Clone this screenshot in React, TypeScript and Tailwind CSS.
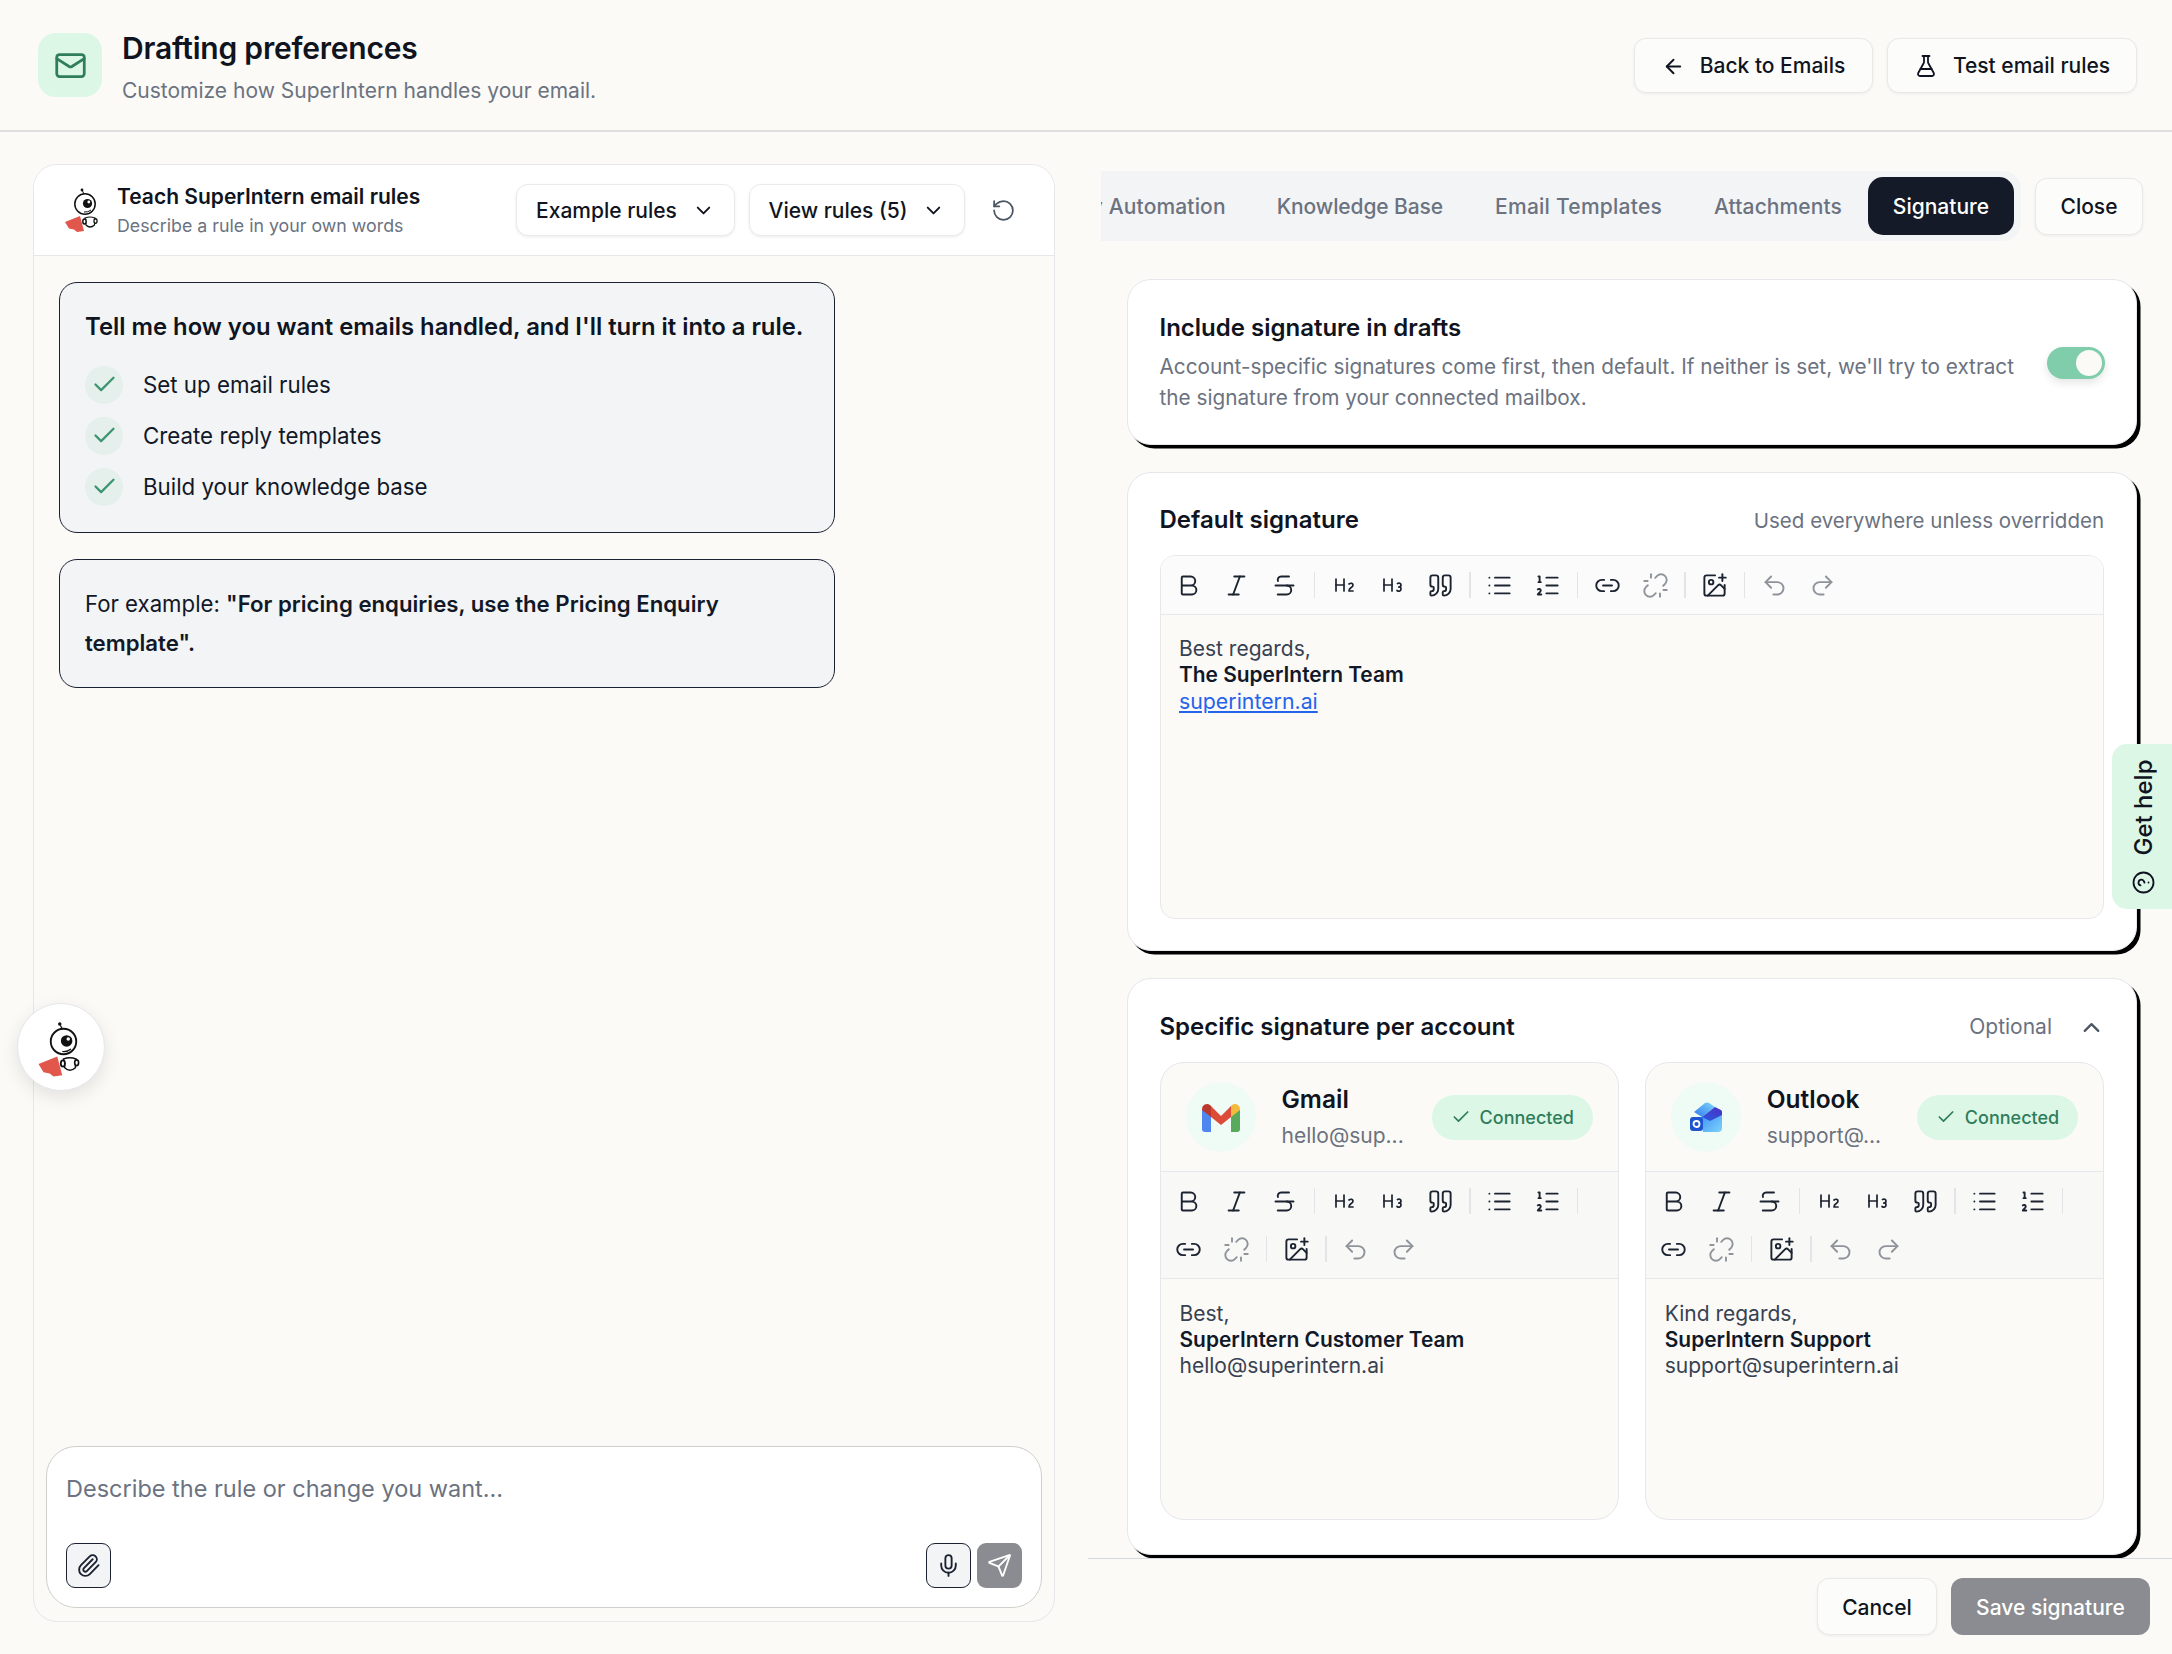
import type { ReactNode } from "react";
import {
  ArrowLeft,
  Bold,
  Check,
  ChevronDown,
  ChevronUp,
  CircleHelp,
  FlaskConical,
  Heading2,
  Heading3,
  ImagePlus,
  Italic,
  Link2,
  List,
  ListOrdered,
  Mail,
  Mic,
  Paperclip,
  Quote,
  Redo2,
  RotateCcw,
  Send,
  Strikethrough,
  Undo2,
  Unlink,
} from "lucide-react";

function BotLogo({ className }: { className: string }) {
  return (
    <svg viewBox="12 16 36 46" className={className} aria-hidden="true">
      <path d="M14 51 L29 45 L33 60 L26 61 L23 58.5 L18 57.5 Z" fill="#e2574c" />
      <circle cx="31" cy="19" r="1.4" fill="#111" />
      <path d="M31.5 20 L33 23" stroke="#111" strokeWidth="1" />
      <circle cx="34" cy="33" r="10.2" fill="#fff" stroke="#111" strokeWidth="1.5" />
      <circle cx="36.5" cy="32.5" r="4.6" fill="#111" />
      <circle cx="37.8" cy="31" r="1.4" fill="#fff" />
      <path d="M33 41 Q37 41.5 40 39" stroke="#111" strokeWidth="1" fill="none" />
      <path d="M34 47 Q39 45 44 47 L43.5 54 Q39 58 35 54 Z" fill="#fff" stroke="#111" strokeWidth="1.2" />
      <ellipse cx="33.5" cy="50.5" rx="2.4" ry="3.2" fill="#111" />
      <ellipse cx="44.5" cy="50" rx="2.2" ry="3" fill="#111" />
      <ellipse cx="33.5" cy="50.5" rx="0.9" ry="1.8" fill="#fff" />
      <ellipse cx="44.5" cy="50" rx="0.9" ry="1.6" fill="#fff" />
    </svg>
  );
}

function GmailLogo() {
  return (
    <svg viewBox="0 0 38 29" className="h-[29px] w-[38px]" aria-hidden="true">
      <path d="M0 6 L9 10 V29 H3 A3 3 0 0 1 0 26 Z" fill="#4f86f0" />
      <path d="M38 6 L29 10 V29 H35 A3 3 0 0 0 38 26 Z" fill="#5aaa5e" />
      <path d="M9 3 L19 13 L29 3 V14 L19 22 L9 14 Z" fill="#dd4b39" />
      <path d="M0 6 A5 5 0 0 1 8 2 L9 3 V14 L0 7 Z" fill="#b93a2c" />
      <path d="M38 6 A5 5 0 0 0 30 2 L29 3 V14 L38 7 Z" fill="#f3bb3e" />
    </svg>
  );
}

function OutlookLogo() {
  return (
    <svg viewBox="0 0 32 30" className="h-[30px] w-[32px]" aria-hidden="true">
      <defs>
        <linearGradient id="olBand1" x1="0" y1="1" x2="1" y2="0">
          <stop offset="0" stopColor="#2f7bf0" />
          <stop offset="1" stopColor="#7fd6fa" />
        </linearGradient>
        <linearGradient id="olBand2" x1="0" y1="1" x2="1" y2="0">
          <stop offset="0" stopColor="#2a5be0" />
          <stop offset="1" stopColor="#4a2fc4" />
        </linearGradient>
        <linearGradient id="olBody" x1="0" y1="0" x2="1" y2="1">
          <stop offset="0" stopColor="#3a8df5" />
          <stop offset="1" stopColor="#7fd3fa" />
        </linearGradient>
      </defs>
      <path d="M11 15 L24 10 L32 10 V26 A4 4 0 0 1 28 30 H13 Z" fill="url(#olBody)" />
      <path d="M4 10 L15 1 Q17 0 19 1 L25 5 L12 15 Z" fill="url(#olBand1)" />
      <path d="M12 15 L25 5 L31 8 Q32 9 32 10 V13 L20 19 Z" fill="url(#olBand2)" />
      <rect x="0" y="15" width="13" height="14" rx="3" fill="#1c55cf" />
      <circle cx="6.5" cy="22" r="3" fill="none" stroke="#fff" strokeWidth="1.8" />
    </svg>
  );
}

function HeaderButton({ children }: { children: ReactNode }) {
  return (
    <button
      type="button"
      className="flex items-center justify-center rounded-[12px] border-[1.5px] border-[#e8e8e6] bg-[#fcfcfa] text-[21px] font-medium text-[#0f1420] shadow-[0_1px_3px_rgba(0,0,0,0.06)]"
    >
      {children}
    </button>
  );
}

function Tool({ children, dim }: { children: ReactNode; dim?: boolean }) {
  return (
    <span className={`flex h-[48px] w-[48px] items-center justify-center ${dim ? "text-[#8f949b]" : "text-[#1c2330]"}`}>
      {children}
    </span>
  );
}

function ToolDivider() {
  return <span className="mx-[5px] h-[26px] w-[1.5px] bg-[#e3e4e7]" />;
}

function EditorToolbar({ className }: { className: string }) {
  const size = 27;
  const sw = 1.7;
  return (
    <div className={`flex flex-wrap items-center px-[4px] py-[5px] ${className}`}>
      <Tool><Bold size={size} strokeWidth={sw} /></Tool>
      <Tool><Italic size={size} strokeWidth={sw} /></Tool>
      <Tool><Strikethrough size={size} strokeWidth={sw} /></Tool>
      <ToolDivider />
      <Tool><Heading2 size={size - 3} strokeWidth={sw} /></Tool>
      <Tool><Heading3 size={size - 3} strokeWidth={sw} /></Tool>
      <Tool><Quote size={size} strokeWidth={sw} /></Tool>
      <ToolDivider />
      <Tool><List size={size} strokeWidth={sw} /></Tool>
      <Tool><ListOrdered size={size} strokeWidth={sw} /></Tool>
      <ToolDivider />
      <Tool><Link2 size={size} strokeWidth={sw} /></Tool>
      <Tool dim><Unlink size={size} strokeWidth={sw} /></Tool>
      <ToolDivider />
      <Tool><ImagePlus size={size} strokeWidth={sw} /></Tool>
      <ToolDivider />
      <Tool dim><Undo2 size={size} strokeWidth={sw} /></Tool>
      <Tool dim><Redo2 size={size} strokeWidth={sw} /></Tool>
    </div>
  );
}

function AccountCard({
  logo,
  name,
  email,
  lines,
}: {
  logo: ReactNode;
  name: string;
  email: string;
  lines: [string, string, string];
}) {
  return (
    <div className="flex h-[458px] w-[460px] flex-col overflow-hidden rounded-[24px] border-[1.5px] border-[#e5e7eb] bg-[#fbfaf7]">
      <div className="flex h-[109px] shrink-0 items-center border-b-[1.5px] border-[#e5e7eb] pl-[25px] pr-[25px]">
        <div className="flex h-[70px] w-[70px] shrink-0 items-center justify-center rounded-full bg-[#effbf5]">{logo}</div>
        <div className="ml-[26px] min-w-0 flex-1">
          <div className="text-[24.5px] leading-[33px] font-semibold text-[#0f1420]">{name}</div>
          <div className="mt-[4px] text-[21px] leading-[31px] text-[#6b7280]">{email}</div>
        </div>
        <div className="flex h-[45px] w-[161px] shrink-0 items-center justify-center gap-[9px] rounded-full bg-[#dcf7e6] text-[18px] font-medium text-[#2f7d5b]">
          <Check size={20} strokeWidth={2} />
          Connected
        </div>
      </div>
      <EditorToolbar className="border-b-[1.5px] border-[#e8e8ea] bg-[#f8f8f7]" />
      <div className="px-[19px] pt-[22px] text-[21px] leading-[26px] text-[#374151]">
        <div>{lines[0]}</div>
        <div className="text-[20.9px] font-semibold text-[#111827]">{lines[1]}</div>
        <div>{lines[2]}</div>
      </div>
    </div>
  );
}

function ChecklistRow({ label }: { label: string }) {
  return (
    <div className="flex items-center gap-[20px]">
      <span className="flex h-[38px] w-[38px] items-center justify-center rounded-full bg-[#e5efeb] text-[#3d9470]">
        <Check size={27} strokeWidth={2} />
      </span>
      <span className="text-[22.3px] text-[#111827]">{label}</span>
    </div>
  );
}

export default function App() {
  return (
    <div className="relative flex h-[1654px] w-[2172px] flex-col overflow-hidden bg-[#fbfaf7] font-['Inter',sans-serif]">
      {/* top bar */}
      <header className="flex h-[132px] shrink-0 items-center border-b-[2px] border-[#dfdfe2] pl-[38px] pr-[35px]">
        <div className="flex h-[64px] w-[64px] items-center justify-center rounded-[18px] bg-[#dcf7e6] text-[#2f7d5b]">
          <Mail size={33} strokeWidth={2} />
        </div>
        <div className="ml-[20px] pt-[3.5px]">
          <h1 className="text-[30px] leading-[40px] font-semibold tracking-[-0.2px] text-[#0f1420]">Drafting preferences</h1>
          <p className="mt-[6.5px] text-[21px] leading-[31px] text-[#6b7280]">Customize how SuperIntern handles your email.</p>
        </div>
        <div className="ml-auto flex gap-[14px]">
          <HeaderButton>
            <span className="flex h-[53px] w-[237px] items-center justify-center gap-[15px] pt-[2px]">
              <ArrowLeft size={23} strokeWidth={2} />
              Back to Emails
            </span>
          </HeaderButton>
          <HeaderButton>
            <span className="flex h-[53px] w-[248px] items-center justify-center gap-[15px] pt-[2px]">
              <FlaskConical size={24} strokeWidth={1.8} />
              Test email rules
            </span>
          </HeaderButton>
        </div>
      </header>

      <main className="flex min-h-0 flex-1">
        {/* left: chat panel */}
        <section className="w-[1088px] shrink-0 pl-[33px] pr-[33px] pt-[32px] pb-[32px]">
          <div className="flex h-full flex-col overflow-hidden rounded-[24px] border-[1.5px] border-[#e5e7eb]">
            <div className="flex h-[91px] shrink-0 items-center border-b-[1.5px] border-[#e5e7eb] bg-white pl-[29px] pr-[38px]">
              <BotLogo className="h-[46px] w-[36px]" />
              <div className="ml-[18px]">
                <div className="text-[21px] leading-[30px] font-semibold text-[#0f1420]">Teach SuperIntern email rules</div>
                <div className="text-[17.8px] leading-[27px] text-[#6b7280]">Describe a rule in your own words</div>
              </div>
              <button type="button" className="ml-auto flex h-[52px] w-[219px] items-center justify-center gap-[15px] rounded-[12px] border-[1.5px] border-[#eaeaec] bg-white pt-[1px] text-[21px] font-medium text-[#0f1420] shadow-[0_1px_3px_rgba(0,0,0,0.08)]">
                Example rules
                <ChevronDown size={23} strokeWidth={2} />
              </button>
              <button type="button" className="ml-[14px] flex h-[52px] w-[216px] items-center justify-center gap-[15px] rounded-[12px] border-[1.5px] border-[#eaeaec] bg-white pt-[1px] text-[21px] font-medium text-[#0f1420] shadow-[0_1px_3px_rgba(0,0,0,0.08)]">
                View rules (5)
                <ChevronDown size={23} strokeWidth={2} />
              </button>
              <RotateCcw size={25} strokeWidth={1.7} className="ml-[26px] text-[#4b5563]" />
            </div>

            <div className="min-h-0 flex-1 pl-[25px] pt-[25.5px]">
              <div className="w-[776px] rounded-[18px] border-[1.5px] border-[#1a2130] bg-[#f3f4f6] px-[25px] pt-[26px] pb-[26px]">
                <div className="text-[23.85px] leading-[36px] font-semibold text-[#0f1420]">
                  Tell me how you want emails handled, and I'll turn it into a rule.
                </div>
                <div className="mt-[21px] flex flex-col gap-[13px]">
                  <ChecklistRow label="Set up email rules" />
                  <ChecklistRow label="Create reply templates" />
                  <ChecklistRow label="Build your knowledge base" />
                </div>
              </div>
              <div className="mt-[26px] w-[776px] rounded-[18px] border-[1.5px] border-[#1a2130] bg-[#f3f4f6] px-[25px] pt-[24px] pb-[25px] text-[22.2px] leading-[39px] text-[#111827]">
                For example: <strong className="font-semibold">"For pricing enquiries, use the Pricing Enquiry<br />template".</strong>
              </div>
            </div>

            <div className="shrink-0 px-[12px] pb-[13px]">
              <div className="flex h-[162px] flex-col justify-between rounded-[30px] border-[1.5px] border-[#cfcfcc] bg-white pl-[19px] pr-[19px] pt-[24px] pb-[19px]">
                <div className="text-[23.5px] leading-[36px] text-[#6b7280]">Describe the rule or change you want...</div>
                <div className="flex items-center">
                  <span className="flex h-[45px] w-[45px] items-center justify-center rounded-[9px] border-[1.5px] border-[#1a2130] bg-[#f3f4f6] text-[#1a2130]">
                    <Paperclip size={25} strokeWidth={1.8} />
                  </span>
                  <span className="ml-auto flex h-[45px] w-[45px] items-center justify-center rounded-[9px] border-[1.5px] border-[#1a2130] bg-[#f3f4f6] text-[#1a2130]">
                    <Mic size={25} strokeWidth={1.8} />
                  </span>
                  <span className="ml-[6px] flex h-[45px] w-[45px] items-center justify-center rounded-[9px] bg-[#8a8c91] text-white">
                    <Send size={25} strokeWidth={1.8} />
                  </span>
                </div>
              </div>
            </div>
          </div>
        </section>

        {/* right: settings */}
        <section className="flex min-w-0 flex-1 flex-col">
          <div className="flex shrink-0 items-center pl-[13px] pt-[39px]">
            <div className="flex h-[70px] w-[920px] items-center justify-end overflow-hidden rounded-r-[18px] bg-[#f3f4f6] pr-[7px] text-[21px] font-medium whitespace-nowrap text-[#6b7280]">
              <span className="px-[26px] pt-[2px] tracking-[0.15px]">Reply Automation</span>
              <span className="pl-[25px] pr-[26px] pt-[2px] tracking-[-0.1px]">Knowledge Base</span>
              <span className="px-[26px] pt-[2px] tracking-[0.25px]">Email Templates</span>
              <span className="px-[26px] pt-[2px] tracking-[0.1px]">Attachments</span>
              <span className="flex h-[58px] w-[146px] shrink-0 items-center justify-center rounded-[15px] bg-[#141a27] pt-[2px] text-white">Signature</span>
            </div>
            <button type="button" className="ml-[14px] h-[57px] w-[108px] rounded-[12px] border-[1.5px] border-[#e8e8e6] bg-[#fcfcfa] pt-[2px] text-[21px] font-medium text-[#0f1420] shadow-[0_1px_3px_rgba(0,0,0,0.06)]">
              Close
            </button>
          </div>

          <div className="min-h-0 flex-1 overflow-hidden pl-[39px] pt-[38px]">
            <div className="flex h-[166px] w-[1010px] rounded-[24px] border-[1.5px] border-[#e5e7eb] bg-white pl-[31.5px] pr-[31px] pt-[29.5px] shadow-[3.5px_3.5px_0_#000]">
              <div className="min-w-0 flex-1">
                <h2 className="text-[24px] leading-[36px] font-semibold text-[#0f1420]">Include signature in drafts</h2>
                <p className="mt-[5.5px] w-[880px] text-[20.75px] leading-[31px] text-[#6b7280]">
                  Account-specific signatures come first, then default. If neither is set, we'll try to extract the signature from your connected mailbox.
                </p>
              </div>
              <div className="mt-[37px] flex h-[32px] w-[58px] shrink-0 items-center justify-end rounded-full bg-[#7fcdab] pr-[3px] shadow-[0_4px_8px_rgba(0,0,0,0.1)]">
                <span className="h-[26px] w-[26px] rounded-full bg-[#fbfaf7]" />
              </div>
            </div>

            <div className="mt-[27px] h-[479px] w-[1010px] rounded-[24px] border-[1.5px] border-[#e5e7eb] bg-white pl-[31.5px] pr-[32px] pt-[29px] shadow-[3.5px_3.5px_0_#000]">
              <div className="flex items-center justify-between">
                <h2 className="text-[24px] leading-[36px] font-semibold text-[#0f1420]">Default signature</h2>
                <span className="pt-[2px] text-[20.5px] text-[#6b7280]">Used everywhere unless overridden</span>
              </div>
              <div className="mt-[17px] h-[364px] overflow-hidden rounded-[15px] border-[1.5px] border-[#e8e8ea] bg-[#fbfaf7]">
                <EditorToolbar className="border-b-[1.5px] border-[#e8e8ea] bg-[#fbfbfb]" />
                <div className="px-[18.5px] pt-[21px] text-[21px] leading-[26px] text-[#374151]">
                  <div>Best regards,</div>
                  <div className="text-[20.9px] font-semibold text-[#111827]">The SuperIntern Team</div>
                  <div className="text-[21.3px] text-[#2563eb] underline">superintern.ai</div>
                </div>
              </div>
            </div>

            <div className="mt-[27px] h-[577px] w-[1010px] rounded-[24px] border-[1.5px] border-[#e5e7eb] bg-white pl-[31.5px] pr-[32px] pt-[30px] shadow-[3.5px_3.5px_0_#000]">
              <div className="flex items-center">
                <h2 className="text-[24px] leading-[36px] font-semibold text-[#0f1420]">Specific signature per account</h2>
                <span className="ml-auto text-[21px] text-[#6b7280]">Optional</span>
                <ChevronUp size={27} strokeWidth={2} className="ml-[26px] mr-[-1px] text-[#4b5563]" />
              </div>
              <div className="mt-[17px] flex gap-[26px]">
                <AccountCard
                  logo={<GmailLogo />}
                  name="Gmail"
                  email="hello@sup..."
                  lines={["Best,", "SuperIntern Customer Team", "hello@superintern.ai"]}
                />
                <AccountCard
                  logo={<OutlookLogo />}
                  name="Outlook"
                  email="support@..."
                  lines={["Kind regards,", "SuperIntern Support", "support@superintern.ai"]}
                />
              </div>
            </div>
          </div>

          <div className="relative z-10 flex h-[96px] shrink-0 justify-end gap-[14px] border-t-[1.5px] border-[#d5d9e0] bg-[#fbfaf7] pt-[19px] pr-[22px]">
            <button type="button" className="h-[57px] w-[120px] rounded-[12px] border-[1.5px] border-[#e8e8e6] bg-[#fcfcfa] pt-[2px] text-[21px] font-medium text-[#0f1420] shadow-[0_1px_3px_rgba(0,0,0,0.06)]">
              Cancel
            </button>
            <button type="button" className="h-[57px] w-[199px] rounded-[12px] bg-[#8a8c91] pt-[2px] text-[21px] font-medium text-white">
              Save signature
            </button>
          </div>
        </section>
      </main>

      {/* floating bot bubble */}
      <div className="absolute left-[17px] top-[1003px] flex h-[88px] w-[88px] items-center justify-center rounded-full border-[1.5px] border-[#e5e7eb] bg-white shadow-[0_6px_18px_rgba(0,0,0,0.1)]">
        <BotLogo className="mr-[6px] mt-[3px] h-[58px] w-[45px]" />
      </div>

      {/* get help tab */}
      <div className="absolute right-0 top-[744px] flex h-[165px] w-[60px] items-center justify-center rounded-l-[15px] bg-[#dcf7e6] pl-[3px]">
        <div className="flex -rotate-90 items-center gap-[15px] whitespace-nowrap text-[24px] font-medium text-[#0f1420]">
          <CircleHelp size={24} strokeWidth={1.8} />
          Get help
        </div>
      </div>
    </div>
  );
}
